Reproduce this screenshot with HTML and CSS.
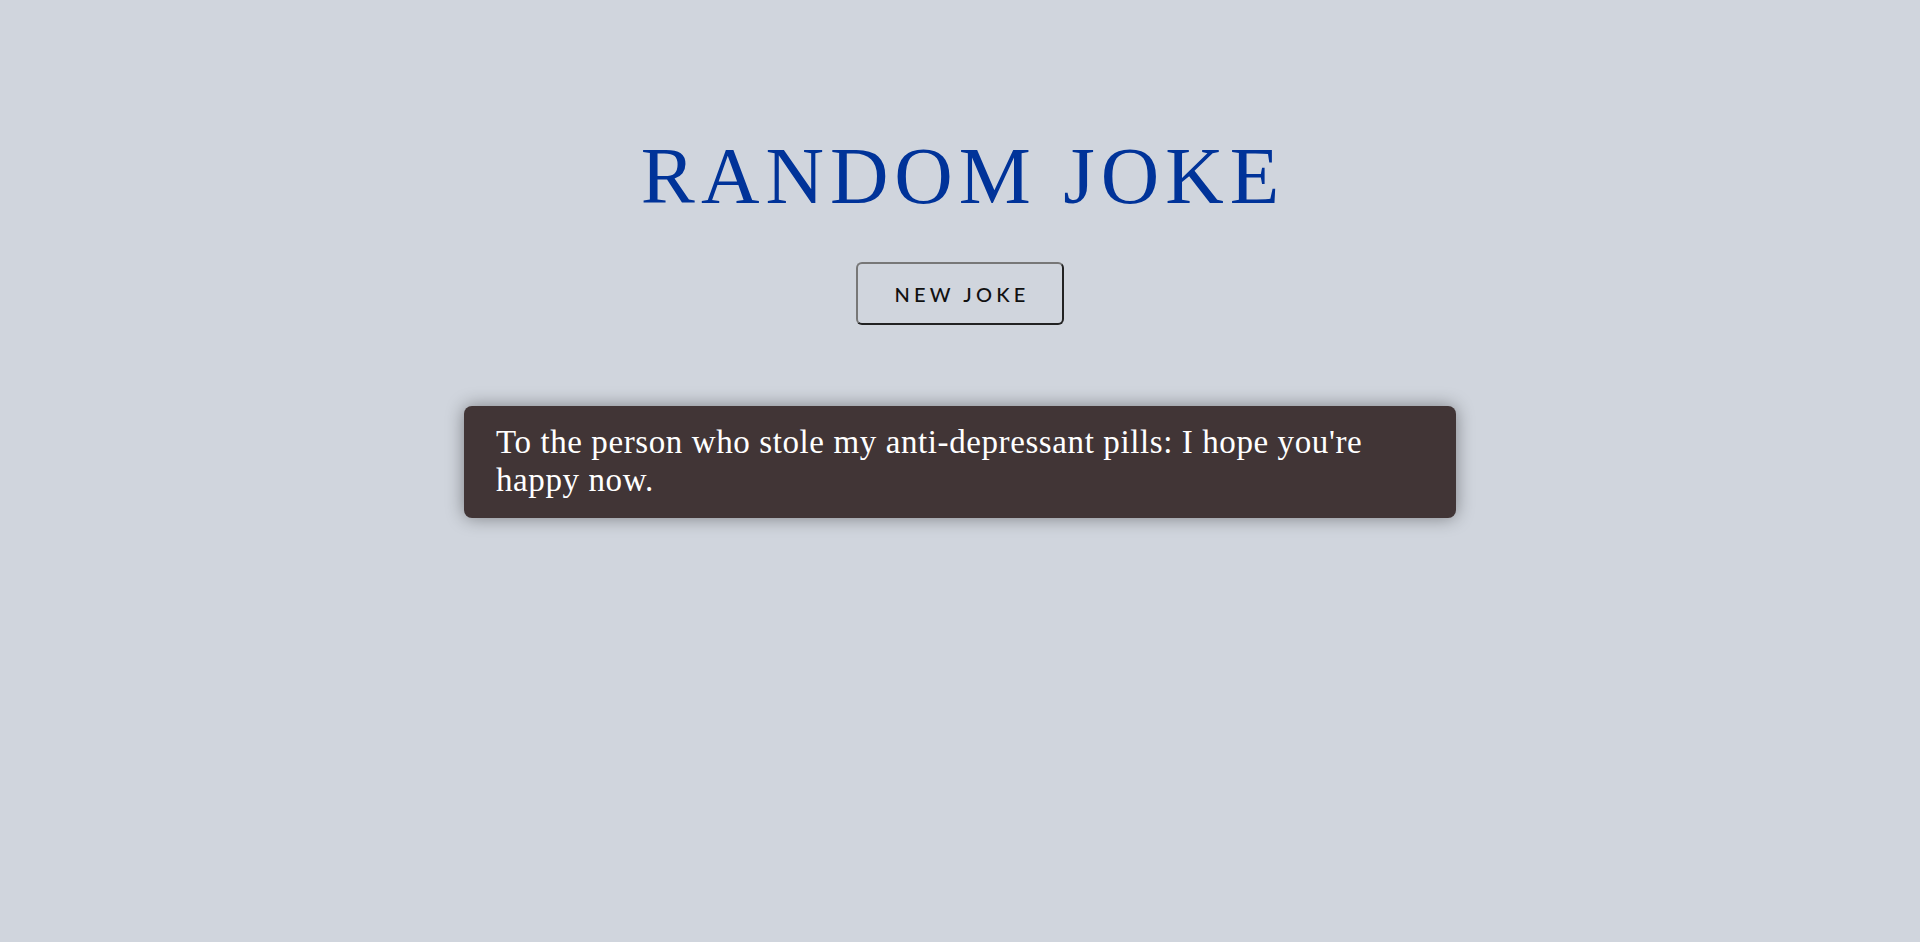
FILE: index.html
```html
<!DOCTYPE html>
<html lang="en">
<head>
<meta charset="utf-8">
<title>Random Joke</title>
<link rel="stylesheet" href="styles.css">
</head>
<body>
<main class="page">
  <h1 class="title">RANDOM JOKE</h1>
  <button class="btn" type="button">NEW JOKE</button>
  <div class="joke">
    <p class="joke-text">To the person who stole my anti-depressant pills: I hope you're happy now.</p>
  </div>
</main>
</body>
</html>
```

FILE: styles.css
```css
html, body {
  margin: 0;
  padding: 0;
  height: 100%;
}
body {
  background: #d0d5dd;
  font-family: "Liberation Serif", "DejaVu Serif", serif;
}
.page {
  display: flex;
  flex-direction: column;
  align-items: center;
  padding-top: 130px;
}
.title {
  margin: 0;
  font-family: "Liberation Serif", serif;
  font-weight: normal;
  font-size: 81px;
  line-height: 92px;
  letter-spacing: 6px;
  padding-left: 6px;
  color: #003399;
}
.btn {
  margin-top: 40px;
  width: 208px;
  height: 63px;
  background: transparent;
  border: 2px solid #222;
  border-top-color: #777;
  border-left-color: #777;
  border-radius: 6px;
  font-family: Lato, "Open Sans", sans-serif;
  font-size: 20px;
  font-weight: 500;
  letter-spacing: 4.2px;
  padding: 0 0 0 4px;
  color: #111;
  cursor: pointer;
}
.joke {
  margin-top: 81px;
  width: 992px;
  box-sizing: border-box;
  background: #413536;
  border-radius: 8px;
  box-shadow: 0 0 18px rgba(0, 0, 0, 0.4);
  padding: 17px 32px 19px;
}
.joke-text {
  margin: 0;
  color: #ffffff;
  font-family: "Liberation Serif", serif;
  font-size: 33px;
  line-height: 38px;
  letter-spacing: 0.6px;
}
```
